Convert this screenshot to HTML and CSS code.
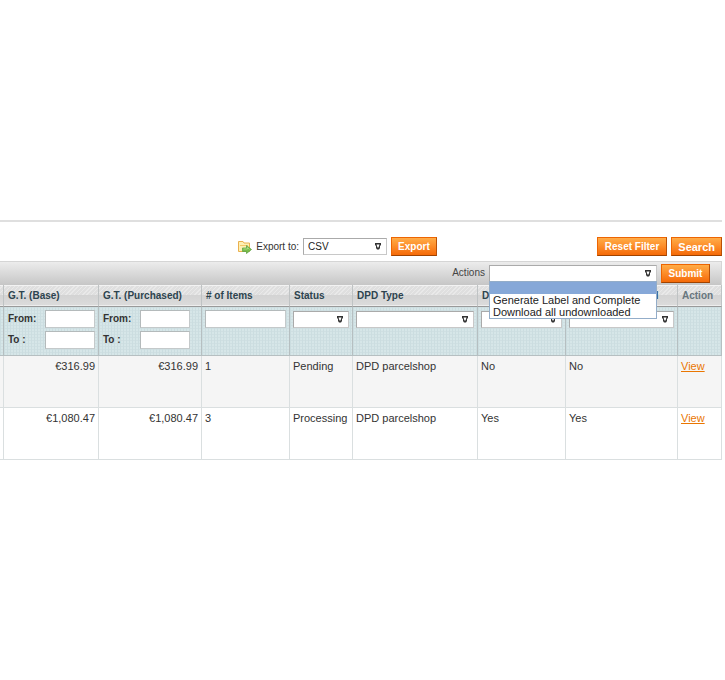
FILE: index.html
```html
<!DOCTYPE html>
<html lang="en">
<head>
<meta charset="utf-8">
<title>Orders</title>
<link rel="stylesheet" href="styles.css">
</head>
<body>
<svg width="0" height="0" class="defs" aria-hidden="true">
  <symbol id="arrow" viewBox="0 0 6 7"><path d="M0 0H6V2L5 3V5L4 6.500H2L1 5V3L0 2Z" fill="#333"/><path d="M1.500 1.500H4.500L3.500 4.500H2.500Z" fill="#fff"/></symbol>
</svg>
<main class="grid-page">
  <div class="toolbar">
    <div class="export">
      <svg class="export-icon" viewBox="0 0 14 14" aria-hidden="true">
        <path d="M.5 11.500V1.500H5L6 3H11.500V11.500Z" fill="#fdf0b4" stroke="#eab04e"/>
        <path d="M2 5.500H10" stroke="#f2c969" fill="none"/>
        <path d="M4.500 8H8.500V5.500L13.500 9.500L8.500 13.500V11.500H4.500Z" fill="#78bd4b" stroke="#5fa548" stroke-width=".8"/>
        <path d="M5.500 9H9.500V7.500L11.500 9.500" fill="none" stroke="#b4df8c" stroke-width=".8"/>
      </svg>
      <label for="format">Export to:</label>
      <span class="select format"><select id="format"><option>CSV</option><option>Excel XML</option></select><svg><use href="#arrow"/></svg></span>
      <button type="button">Export</button>
    </div>
    <div class="filter-buttons">
      <button type="button">Reset Filter</button>
      <button type="button">Search</button>
    </div>
  </div>
  <div class="massaction">
    <label for="actions">Actions</label>
    <div class="select actions">
      <select id="actions"><option></option></select><svg><use href="#arrow"/></svg>
      <ul class="menu" role="listbox" aria-label="Actions">
        <li role="option" aria-selected="true"></li>
        <li role="option" aria-selected="false">Generate Label and Complete</li>
        <li role="option" aria-selected="false">Download all undownloaded</li>
      </ul>
    </div>
    <button type="button">Submit</button>
  </div>
  <table>
    <colgroup><col class="c-edge"><col class="c-base"><col class="c-purchased"><col class="c-items"><col class="c-status"><col class="c-type"><col class="c-label"><col class="c-download"><col class="c-action"></colgroup>
    <thead>
      <tr class="headings"><th></th><th>G.T. (Base)</th><th>G.T. (Purchased)</th><th># of Items</th><th>Status</th><th>DPD Type</th><th>DPD Label</th><th>Label Downloaded</th><th class="plain">Action</th></tr>
      <tr class="filters">
        <td></td>
        <td><div class="range"><label for="bf">From:</label><input id="bf" type="text"><label for="bt">To :</label><input id="bt" type="text"></div></td>
        <td><div class="range"><label for="pf">From:</label><input id="pf" type="text"><label for="pt">To :</label><input id="pt" type="text"></div></td>
        <td><input type="text" aria-label="# of Items"></td>
        <td><span class="select"><select aria-label="Status"><option></option></select><svg><use href="#arrow"/></svg></span></td>
        <td><span class="select"><select aria-label="DPD Type"><option></option></select><svg><use href="#arrow"/></svg></span></td>
        <td><span class="select"><select aria-label="DPD Label"><option></option></select><svg><use href="#arrow"/></svg></span></td>
        <td><span class="select"><select aria-label="Label Downloaded"><option></option></select><svg><use href="#arrow"/></svg></span></td>
        <td></td>
      </tr>
    </thead>
    <tbody>
      <tr><td></td><td class="price">€316.99</td><td class="price">€316.99</td><td>1</td><td>Pending</td><td>DPD parcelshop</td><td>No</td><td>No</td><td><a href="#">View</a></td></tr>
      <tr><td></td><td class="price">€1,080.47</td><td class="price">€1,080.47</td><td>3</td><td>Processing</td><td>DPD parcelshop</td><td>Yes</td><td>Yes</td><td><a href="#">View</a></td></tr>
    </tbody>
  </table>
</main>
</body>
</html>
```
FILE: styles.css
```css
* { box-sizing: border-box; }
body {
  margin: 0;
  background: #fff;
  color: #333;
  font: 11px/14px "Liberation Sans", Arial, sans-serif;
}
.defs { position: absolute; }
.grid-page {
  margin: 220px 3px 0 0;
  border-top: 2px solid #dfdfdf;
}
input, select, button { font: inherit; margin: 0; display: block; border-radius: 0; }
input, select {
  width: 100%;
  border: 1px solid;
  border-color: #aaa #c8c8c8 #c8c8c8 #aaa;
  background: #fff;
  color: #222;
  appearance: none;
  outline: 0;
}
input { height: 18px; padding: 0 2px; border-color: #b4babb #c4c9ca #c4c9ca #b4babb; }
select { height: 17px; padding: 0 4px; }
button {
  height: 19px;
  padding: 0 6px;
  border: 1px solid;
  border-color: #ed6502 #b85008 #a04300 #ed6502;
  background: linear-gradient(#ffac47, #fd8f2c 45%, #f56a08);
  color: #fff;
  font-weight: bold;
  line-height: 16px;
  white-space: nowrap;
}
.select { position: relative; display: block; }
.select > svg {
  position: absolute;
  top: 5px;
  right: 6px;
  width: 6px;
  height: 7px;
  pointer-events: none;
}
.toolbar {
  display: flex;
  justify-content: space-between;
  align-items: center;
  height: 39px;
  padding: 10px 0 0 33%;
}
.export, .filter-buttons { display: flex; align-items: center; gap: 4px; }
.export { font-size: 10px; }
.export-icon { width: 14px; height: 14px; }
.format { width: 84px; }
.filter-buttons button { padding: 0 6px; }
.filter-buttons button:first-child { font-size: 10px; padding: 0 7px; }
.massaction {
  display: flex;
  justify-content: flex-end;
  align-items: center;
  gap: 4px;
  height: 24px;
  padding-right: 11px;
  border-top: 1px solid #d5d5d5;
  border-right: 1px solid #d5d5d5;
  background: linear-gradient(#ececec, #c6c6c6);
  font-size: 10px;
  color: #444;
}
.massaction label { line-height: 12px; padding-bottom: 2px; }
.massaction button { width: 49px; }
.actions { width: 168px; font-size: 11px; }
.menu {
  position: absolute;
  z-index: 2;
  top: 16px;
  left: 0;
  right: 0;
  margin: 0;
  padding: 0;
  list-style: none;
  border: 1px solid #93adc9;
  background: #fff;
  color: #222;
  line-height: 12px;
}
.menu li { height: 12px; padding-left: 3px; }
.menu li[aria-selected="true"] { background: #86a8d8; }
table {
  width: 100%;
  table-layout: fixed;
  border-collapse: separate;
  border-spacing: 0;
}
.c-edge { width: 4px; }
.c-base { width: 95px; }
.c-purchased { width: 103px; }
.c-items { width: 88px; }
.c-status { width: 63px; }
.c-type { width: 125px; }
.c-label { width: 88px; }
.c-download { width: 112px; }
.c-action { width: 44px; }
th, td {
  padding: 3px;
  border-right: 1px solid #dadfe0;
  border-bottom: 1px solid #dadfe0;
  text-align: left;
  vertical-align: top;
  white-space: nowrap;
}
th {
  height: 22px;
  padding: 4px 3px 3px 4px;
  border-right-color: #bfc3c4;
  border-bottom-color: #999;
  background:
    linear-gradient(transparent 48%, #d3d3d3 48%, #dcdcdc),
    repeating-linear-gradient(135deg, #dfdfdf 0 2px, #e9e9e9 2px 3px);
  box-shadow: inset 0 1px #f3f3f3, inset 0 -1px #eee;
  color: #2d444f;
  font-size: 10px;
}
th:first-child, td:first-child { padding: 0; }
.plain { color: #67767e; }
.filters td {
  height: 49px;
  border-color: #b6bfc1;
  background:
    repeating-linear-gradient(90deg, #cbdde0 0 1px, transparent 1px 3px),
    repeating-linear-gradient(#cfdfe2 0 1px, #d6e6e8 1px 3px);
}
.filters .select { padding-top: 1px; }
.filters .select > svg { top: 6px; }
.range {
  display: grid;
  grid-template-columns: 37px 50px;
  row-gap: 3px;
  padding-left: 1px;
  font-size: 10px;
  font-weight: bold;
}
.range label { line-height: 17px; }
tbody td { height: 52px; }
tbody tr:nth-child(odd) td { background: #f5f5f5; }
.price { text-align: right; }
a { color: #ea7601; }
```
